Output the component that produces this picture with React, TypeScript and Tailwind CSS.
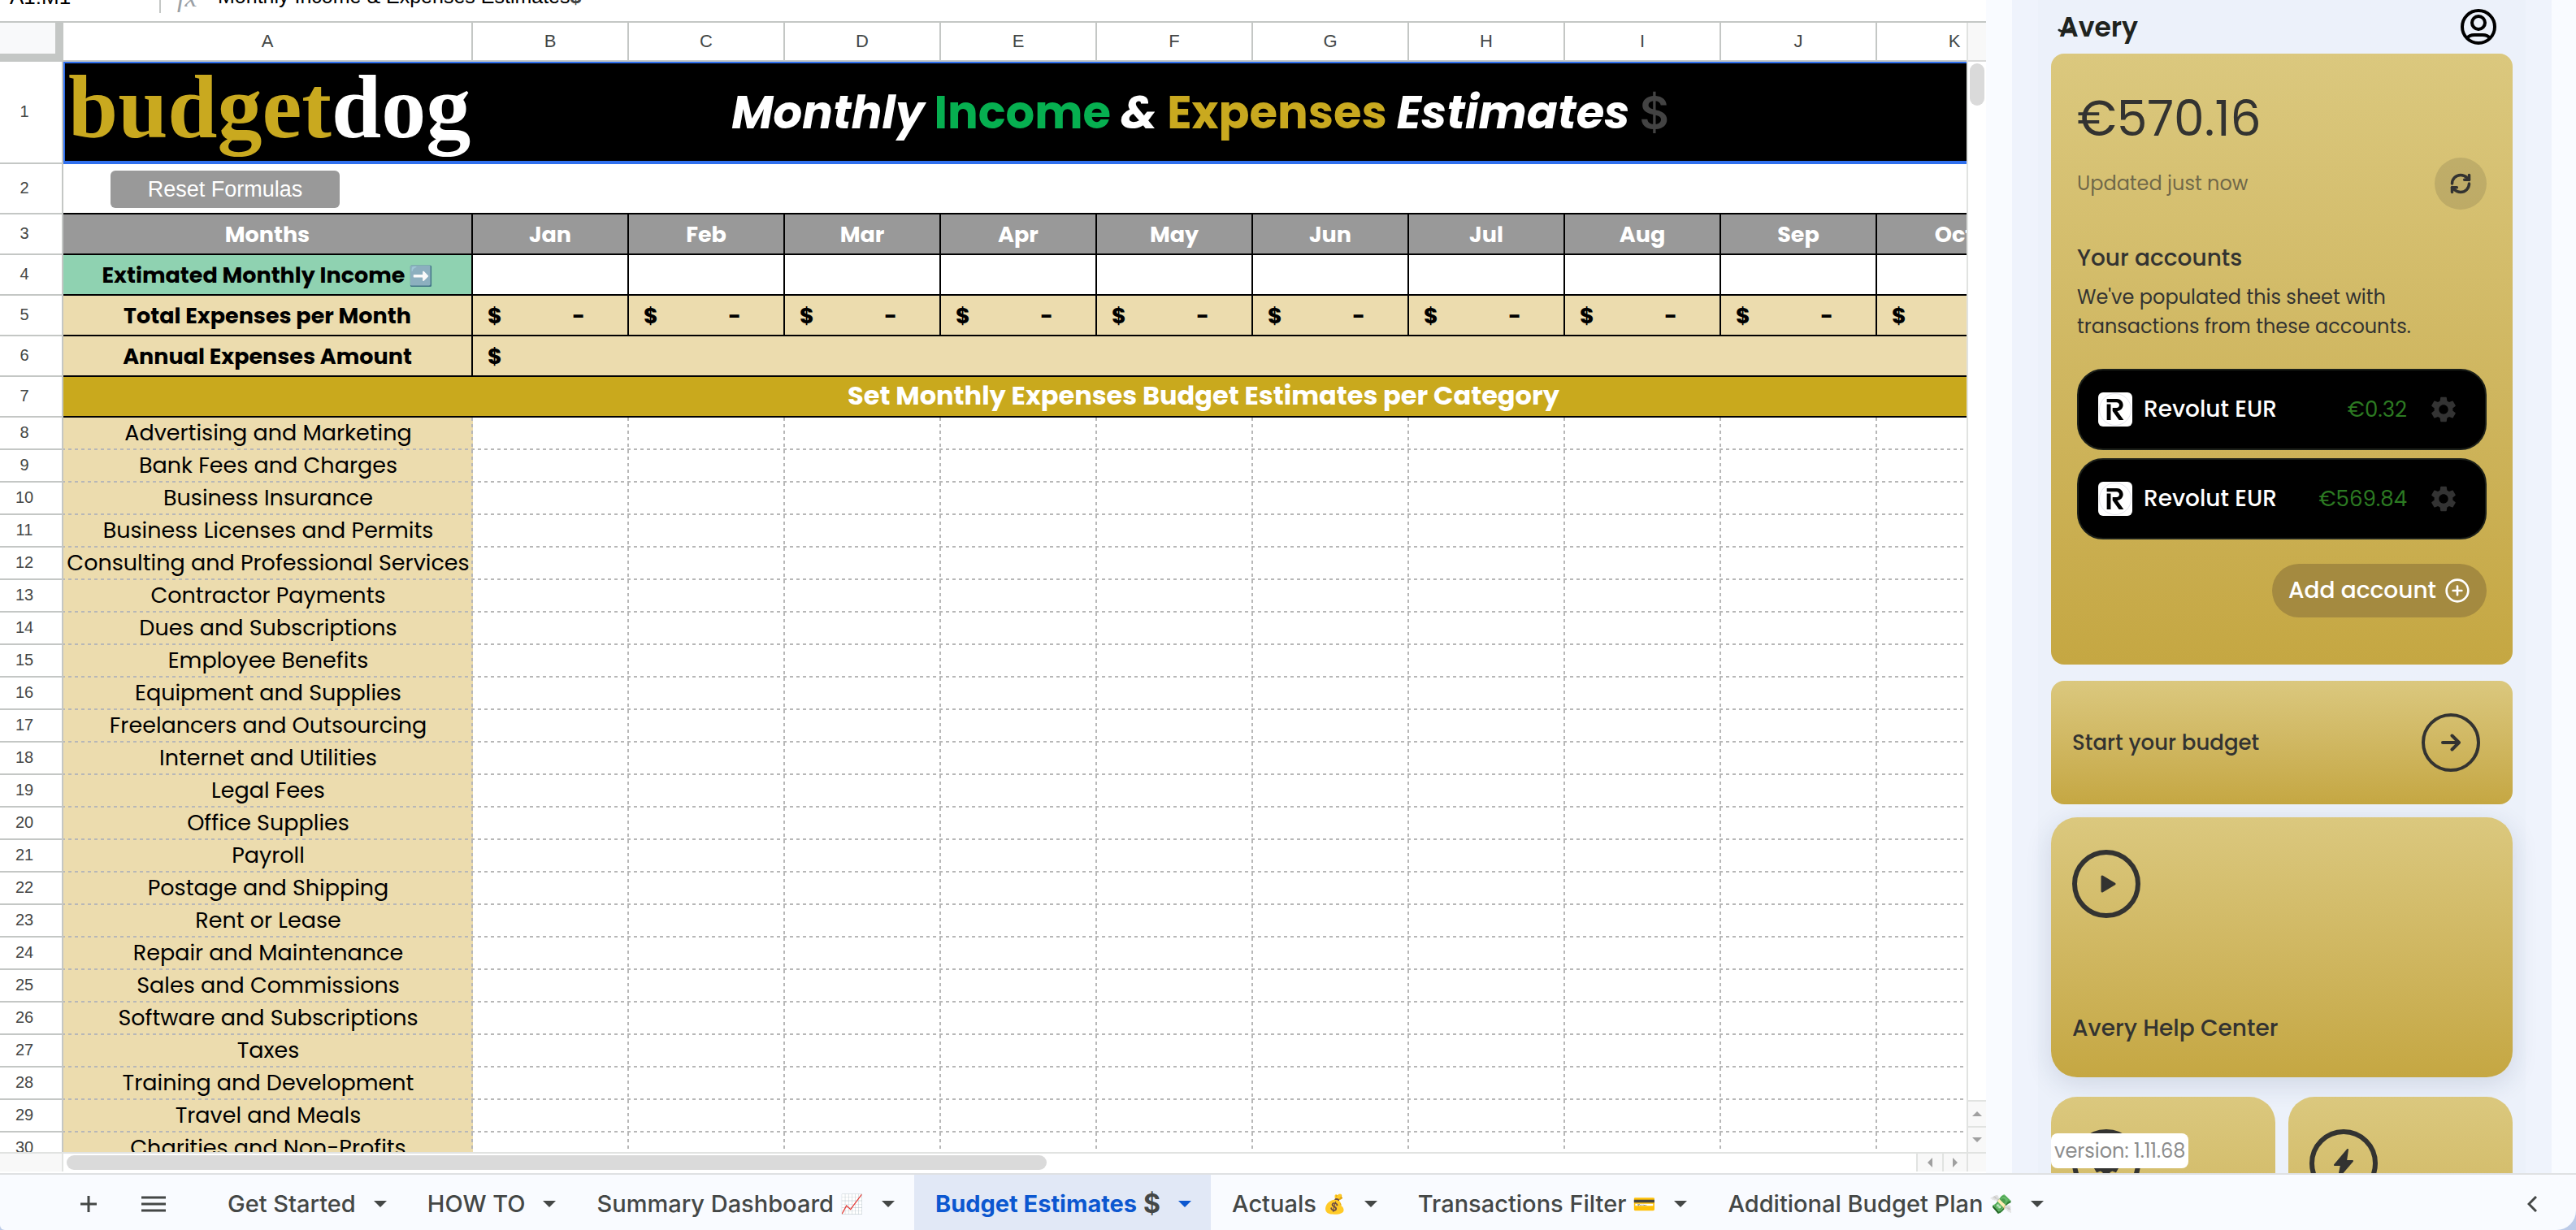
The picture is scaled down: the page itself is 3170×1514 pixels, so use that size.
import { CirclePlus, RefreshCw } from "lucide-react";
import { MdSettings } from "react-icons/md";
import { SiRevolut } from "react-icons/si";

const letters = ["B", "C", "D", "E", "F", "G", "H", "I", "J", "K"];
const months = ["Jan", "Feb", "Mar", "Apr", "May", "Jun", "Jul", "Aug", "Sep", "Oct"];

const categories = [
  "Advertising and Marketing",
  "Bank Fees and Charges",
  "Business Insurance",
  "Business Licenses and Permits",
  "Consulting and Professional Services",
  "Contractor Payments",
  "Dues and Subscriptions",
  "Employee Benefits",
  "Equipment and Supplies",
  "Freelancers and Outsourcing",
  "Internet and Utilities",
  "Legal Fees",
  "Office Supplies",
  "Payroll",
  "Postage and Shipping",
  "Rent or Lease",
  "Repair and Maintenance",
  "Sales and Commissions",
  "Software and Subscriptions",
  "Taxes",
  "Training and Development",
  "Travel and Meals",
  "Charities and Non-Profits",
];

const tabs = [
  { name: "Get Started", icon: "" },
  { name: "HOW TO", icon: "" },
  { name: "Summary Dashboard", icon: "📈" },
  { name: "Budget Estimates", icon: "$", active: true },
  { name: "Actuals", icon: "💰" },
  { name: "Transactions Filter", icon: "💳" },
  { name: "Additional Budget Plan", icon: "💸" },
];

const accounts = [
  { name: "Revolut EUR", amount: "€0.32" },
  { name: "Revolut EUR", amount: "€569.84" },
];

const dashed =
  "[background-image:repeating-linear-gradient(90deg,#b7b7b7_0_2px,transparent_2px_6px,#b7b7b7_6px_8px),repeating-linear-gradient(#b7b7b7_0_4px,transparent_4px_8px)] [background-position:bottom,right] [background-size:100%_2px,2px_100%] bg-no-repeat";

function RowNumber({ n }: { n: number }) {
  return (
    <th
      scope="row"
      className="border-r-2 border-b-2 border-[#c4c7c5] bg-white pr-4 pb-0.5 font-['Liberation_Sans',sans-serif] text-[20px] leading-none font-normal text-[#444746]"
    >
      {n}
    </th>
  );
}

function Triangle({ className = "" }: { className?: string }) {
  return (
    <svg viewBox="0 0 16 8" className={className} fill="currentColor" aria-hidden="true">
      <path d="M0 0h16L8 8z" />
    </svg>
  );
}

function FormulaBar() {
  return (
    <div className="flex h-7 shrink-0 items-end overflow-hidden border-b-2 border-[#c4c7c5] bg-white">
      <div className="flex h-15 items-center font-['Liberation_Sans',sans-serif] text-[26px] text-black">
        <span className="w-[160px] pl-3">A1:M1</span>
        <Triangle className="h-2 w-3 text-[#444746]" />
        <span className="ml-6 h-9 w-0.5 self-end border-b-10 border-white bg-[#c4c7c5]" />
        <span className="w-[70px] pl-5 font-['Liberation_Serif',serif] text-[34px] text-[#9aa0a6] italic">fx</span>
        <span className="text-[25px]">
          Monthly Income &amp; Expenses Estimates<b className="text-[#434343]">$</b>
        </span>
      </div>
    </div>
  );
}

function Grid() {
  return (
    <table className="w-[2886px] table-fixed border-separate border-spacing-0 text-center font-['Poppins',sans-serif] text-[27px] leading-none text-black">
      <colgroup>
        <col className="w-[78px]" />
        <col className="w-[504px]" />
        {letters.map((l) => (
          <col key={l} className="w-48" />
        ))}
        <col className="w-96" />
      </colgroup>
      <thead>
        <tr className="h-12 font-['Liberation_Sans',sans-serif] text-[22px] text-[#444746]">
          <td className="border-r-10 border-b-10 border-[#c4c7c5] bg-[#f8f9fa]" />
          {["A", ...letters].map((l) => (
            <th key={l} scope="col" className="border-r-2 border-b-2 border-[#c4c7c5] bg-white font-normal">
              {l}
            </th>
          ))}
          <td className="border-b-2 border-[#c4c7c5] bg-white" />
        </tr>
      </thead>
      <tbody>
        <tr className="h-[126px]">
          <RowNumber n={1} />
          <td
            colSpan={12}
            className="relative border-t-2 border-b-4 border-l-2 border-[#2f6fed] bg-black pt-0.5 pr-3 text-[56px] font-bold text-white italic"
          >
            <span className="absolute top-0 left-1 font-['Liberation_Serif',serif] text-[110px] leading-[108px] font-bold text-[#c9a91f] not-italic">
              budget<span className="text-white">dog</span>
            </span>
            <div className="flex items-center justify-center gap-3">
              <span>Monthly</span>
              <span className="text-[#06af50] not-italic">Income</span>
              <span>&amp;</span>
              <span className="text-[#c9a91f] not-italic">Expenses</span>
              <span>Estimates</span>
              <span className="font-['Inter',sans-serif] font-semibold text-[#434343] not-italic">$</span>
            </div>
          </td>
        </tr>
        <tr className="h-[62px]">
          <RowNumber n={2} />
          <td className="border-b-2 border-black bg-white pt-0.5 pl-[58px] text-left">
            <button className="h-[46px] w-[282px] rounded-md bg-[#999999] font-['Liberation_Sans',sans-serif] text-[27px] text-white">
              Reset Formulas
            </button>
          </td>
          <td colSpan={11} className="border-b-2 border-black bg-white" />
        </tr>
        <tr className="h-[50px] bg-[#999999] font-bold text-white">
          <RowNumber n={3} />
          <td className="border-r-2 border-b-2 border-black">Months</td>
          {months.map((m) => (
            <td key={m} className="border-r-2 border-b-2 border-black">
              {m}
            </td>
          ))}
          <td className="border-b-2 border-black" />
        </tr>
        <tr className="h-[50px] bg-white">
          <RowNumber n={4} />
          <td className="border-r-2 border-b-2 border-black bg-[#8fd2b1] font-bold whitespace-nowrap">
            Extimated Monthly Income<span className="ml-1 text-[24px]">➡️</span>
          </td>
          {months.map((m) => (
            <td key={m} className="border-r-2 border-b-2 border-black" />
          ))}
          <td className="border-b-2 border-black" />
        </tr>
        <tr className="h-[50px] bg-[#ecdcae] font-bold">
          <RowNumber n={5} />
          <td className="border-r-2 border-b-2 border-black">Total Expenses per Month</td>
          {months.map((m) => (
            <td key={m} className="border-r-2 border-b-2 border-black pr-13 pl-4.5">
              <div className="flex justify-between">
                <span>$</span>
                <span>-</span>
              </div>
            </td>
          ))}
          <td className="border-b-2 border-black" />
        </tr>
        <tr className="h-[50px] bg-[#ecdcae] font-bold">
          <RowNumber n={6} />
          <td className="border-r-2 border-b-2 border-black">Annual Expenses Amount</td>
          <td colSpan={11} className="border-b-2 border-black pl-4.5 text-left">
            $
          </td>
        </tr>
        <tr className="h-[50px] bg-[#c9a91d] text-[32px] font-bold text-white">
          <RowNumber n={7} />
          <td colSpan={12} className="border-b-2 border-black pr-0.5 pb-0.5">
            Set Monthly Expenses Budget Estimates per Category
          </td>
        </tr>
        {categories.map((category, i) => (
          <tr key={category} className="h-10">
            <RowNumber n={i + 8} />
            <td className={`bg-[#ecdcae] pb-1 whitespace-nowrap ${dashed}`}>{category}</td>
            {letters.map((l) => (
              <td key={l} className={`bg-white ${dashed}`} />
            ))}
            <td className={`bg-white ${dashed}`} />
          </tr>
        ))}
      </tbody>
    </table>
  );
}

function Sheet() {
  return (
    <section className="flex min-w-0 flex-1 flex-col bg-white">
      <FormulaBar />
      <div className="flex min-h-0 flex-1">
        <div className="min-w-0 flex-1 overflow-hidden">
          <Grid />
        </div>
        <div className="flex w-6 flex-col border-l-2 border-[#e1e3e1]">
          <div className="h-12 shrink-0 border-b-2 border-[#d9dad9] bg-[#f8f8f8]" />
          <div className="mx-0.5 mt-0.5 h-13 rounded-full bg-[#dadada]" />
          <button aria-label="Scroll up" className="mt-auto flex h-8 items-center justify-center border-t-2 border-[#e1e3e1] bg-[#f8f8f8]">
            <Triangle className="h-2 w-3 rotate-180 text-[#a0a0a0]" />
          </button>
          <button aria-label="Scroll down" className="flex h-8 items-center justify-center border-t-2 border-[#e1e3e1] bg-[#f8f8f8]">
            <Triangle className="h-2 w-3 text-[#a0a0a0]" />
          </button>
        </div>
      </div>
      <div className="mb-0.5 flex h-6 shrink-0 border-t-2 border-[#e1e3e1]">
        <div className="w-[78px] border-r-2 border-[#e1e3e1] bg-[#f8f8f8]" />
        <div className="flex-1 py-0.5 pl-1">
          <div className="h-full w-[53%] rounded-full bg-[#dadada]" />
        </div>
        <button aria-label="Scroll left" className="flex w-8 items-center justify-center border-l-2 border-[#e1e3e1] bg-[#f8f8f8]">
          <Triangle className="h-2 w-3 rotate-90 text-[#a0a0a0]" />
        </button>
        <button aria-label="Scroll right" className="flex w-8 items-center justify-center border-x-2 border-[#e1e3e1] bg-[#f8f8f8]">
          <Triangle className="h-2 w-3 -rotate-90 text-[#a0a0a0]" />
        </button>
        <div className="w-[22px] bg-[#f8f8f8]" />
      </div>
    </section>
  );
}

function PanelHeader() {
  return (
    <header className="flex h-[66px] items-center justify-between pr-5 pl-2">
      <a href="#" className="relative pl-0.5 text-[33px] leading-none font-semibold text-[#20231e]">
        <svg className="absolute bottom-1.5 left-0 h-3 w-5" viewBox="0 0 20 12" fill="none" stroke="currentColor" strokeWidth="3" strokeLinecap="round" aria-hidden="true">
          <path d="M2 5c3 3 8 2 16-3" />
        </svg>
        Avery
      </a>
      <button aria-label="Profile" className="text-black">
        <svg className="size-11" viewBox="0 0 44 44" fill="none" stroke="currentColor" strokeWidth="4" aria-hidden="true">
          <circle cx="22" cy="22" r="20" />
          <circle cx="22" cy="17" r="8" />
          <path d="M8 36c2-3 5-4 9-4h10c4 0 7 1 9 4" />
        </svg>
      </button>
    </header>
  );
}

function BalanceCard() {
  return (
    <div className="rounded-2xl bg-linear-to-b from-[#dbc87e] to-[#c5a742] px-8 pt-8 pb-[58px]">
      <p className="text-[60px] leading-24">€570.16</p>
      <div className="flex items-center justify-between">
        <p className="text-[24px] text-[#333331]/65">Updated just now</p>
        <button aria-label="Refresh" className="flex size-16 items-center justify-center rounded-full bg-[#333331]/15">
          <RefreshCw className="size-7" strokeWidth={3} />
        </button>
      </div>
      <h2 className="mt-10 text-[28px] leading-10 font-medium">Your accounts</h2>
      <p className="mt-2.5 text-[24px] leading-9">
        We've populated this sheet with
        <br />
        transactions from these accounts.
      </p>
      <ul className="mt-8.5 flex flex-col gap-2.5">
        {accounts.map((account) => (
          <li
            key={account.amount}
            className="flex h-25 items-center rounded-4xl border-2 border-[#1c201a] bg-black pr-8 pl-6"
          >
            <span className="flex size-[42px] items-center justify-center rounded-md bg-white">
              <span className="flex size-10 items-center justify-center rounded-full border border-[#e4e4ec]">
                <SiRevolut className="size-[26px] text-black" />
              </span>
            </span>
            <span className="ml-3.5 text-[28px] font-medium text-white">{account.name}</span>
            <span className="ml-auto text-[26px] text-[#2c7a22]">{account.amount}</span>
            <button aria-label="Account settings" className="ml-[26px] text-[#333333]">
              <MdSettings className="size-[38px]" />
            </button>
          </li>
        ))}
      </ul>
      <div className="mt-[30px] flex justify-end">
        <button className="flex h-[66px] items-center gap-2.5 rounded-full bg-[#a48a40] px-5 text-[28px] font-medium text-white">
          Add account
          <CirclePlus className="size-8" />
        </button>
      </div>
    </div>
  );
}

function Panel() {
  return (
    <aside className="w-[726px] shrink-0 overflow-hidden bg-[#f9fbff] pr-[30px] pl-8 font-['Poppins',sans-serif] text-[#333331]">
      <div className="h-full bg-[#eff3fc] px-8">
        <div className="relative h-full bg-[#ecf1fa] px-4">
          <PanelHeader />
          <BalanceCard />
          <button className="mt-5 flex h-38 w-full items-center justify-between rounded-2xl bg-linear-to-b from-[#dbc87e] to-[#c5a742] pr-10 pl-[26px] text-[26px] font-medium">
            Start your budget
            <span className="flex size-18 items-center justify-center rounded-full border-4 border-[#333331]">
              <svg className="size-6" viewBox="0 0 24 24" fill="none" stroke="currentColor" strokeWidth="4" strokeLinecap="round" strokeLinejoin="round" aria-hidden="true">
                <path d="M2 12h20M13.500 3.500 22 12l-8.500 8.500" />
              </svg>
            </span>
          </button>
          <a
            href="#"
            className="mt-4 flex h-80 flex-col justify-between rounded-4xl bg-linear-to-b from-[#dbc87e] to-[#c5a742] px-[26px] py-10 shadow-[0_8px_32px_rgba(30,50,90,0.14)]"
          >
            <span className="flex size-21 items-center justify-center rounded-full border-6 border-[#333331]">
              <svg className="ml-1 h-[22px] w-[19px]" viewBox="0 0 19 22" fill="currentColor" stroke="currentColor" strokeWidth="3" strokeLinejoin="round" aria-hidden="true">
                <path d="M2 2v18l15-9z" />
              </svg>
            </span>
            <span className="text-[28px] leading-10 font-medium">Avery Help Center</span>
          </a>
          <div className="mt-6 grid grid-cols-2 gap-4">
            <a href="#" aria-label="Settings" className="h-80 rounded-4xl bg-linear-to-b from-[#dbc87e] to-[#c5a742] px-[26px] py-10">
              <span className="flex size-21 items-center justify-center rounded-full border-6 border-[#333331]">
                <MdSettings className="size-10" />
              </span>
            </a>
            <a href="#" aria-label="Automations" className="h-80 rounded-4xl bg-linear-to-b from-[#dbc87e] to-[#c5a742] px-[26px] py-10">
              <span className="flex size-21 items-center justify-center rounded-full border-6 border-[#333331]">
                <svg className="h-9 w-6" viewBox="0 0 24 36" fill="currentColor" stroke="currentColor" strokeWidth="2" strokeLinejoin="round" aria-hidden="true">
                  <path d="M17 1 1 20h8L6 35l17-20h-8z" />
                </svg>
              </span>
            </a>
          </div>
          <p className="absolute bottom-1.5 left-4 rounded-lg bg-white px-1 text-[24px] leading-[43px] text-[#8c8c8c]">
            version: 1.11.68
          </p>
        </div>
      </div>
    </aside>
  );
}

function TabBar() {
  return (
    <footer className="shrink-0 bg-[#bccbe8]">
      <nav className="flex h-[70px] items-stretch rounded-br-3xl rounded-bl-md border-t-2 border-[#dfe1e3] bg-[#f9fbff] pl-[98px] font-['Inter',sans-serif] text-[29px] font-medium text-[#444746]">
        <button aria-label="Add sheet" className="pt-1">
          <svg className="size-[22px]" viewBox="0 0 22 22" stroke="currentColor" strokeWidth="3" aria-hidden="true">
            <path d="M11 1v20M1 11h20" />
          </svg>
        </button>
        <button aria-label="All sheets" className="mr-[50px] ml-[54px] pt-1">
          <svg className="h-5 w-[30px]" viewBox="0 0 30 20" stroke="currentColor" strokeWidth="3" aria-hidden="true">
            <path d="M0 2h30M0 10h30M0 18h30" />
          </svg>
        </button>
        {tabs.map((tab) => (
          <button
            key={tab.name}
            className={`flex items-center pt-1 pr-6 pl-[26px] whitespace-nowrap ${tab.active ? "bg-[#e1e8f6] font-bold text-[#0b57d0]" : ""}`}
          >
            {tab.name}
            {tab.icon && (
              <span className={`ml-2 font-bold text-[#444746] ${tab.active ? "text-[32px]" : "text-[23px]"}`}>
                {tab.icon}
              </span>
            )}
            <Triangle className="ml-[22px] h-2 w-4" />
          </button>
        ))}
        <button aria-label="Show side panel" className="mr-12 ml-auto pt-1">
          <svg className="h-5 w-3" viewBox="0 0 12 20" fill="none" stroke="currentColor" strokeWidth="3" aria-hidden="true">
            <path d="M11 1 2 10l9 9" />
          </svg>
        </button>
      </nav>
    </footer>
  );
}

export default function App() {
  return (
    <main className="flex h-screen flex-col overflow-hidden">
      <div className="flex min-h-0 flex-1">
        <Sheet />
        <Panel />
      </div>
      <TabBar />
    </main>
  );
}
